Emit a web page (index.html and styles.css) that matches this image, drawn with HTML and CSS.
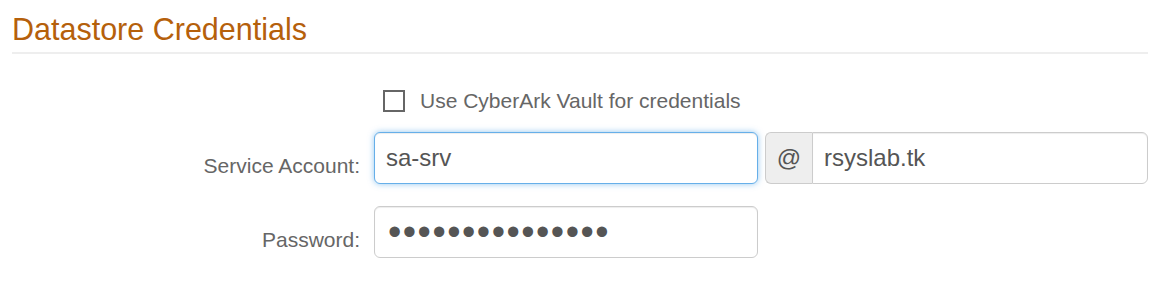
FILE: index.html
```html
<!DOCTYPE html>
<html lang="en">
<head>
    <meta charset="UTF-8">
    <title>Datastore Credentials</title>
    <link rel="stylesheet" href="styles.css">
</head>
<body>
<div class="section">

    <!--标题-->
    <h3 class="section-title">Datastore Credentials</h3>

    <!--表单-->
    <form class="form">
        <div class="row row-check">
            <div class="label"></div>
            <div class="field">
                <label class="check">
                    <input type="checkbox">
                    <span>Use CyberArk Vault for credentials</span>
                </label>
            </div>
        </div>

        <div class="row">
            <label class="label" for="account">Service Account:</label>
            <div class="field">
                <input class="input focus" id="account" type="text" value="sa-srv">
            </div>
            <div class="group">
                <span class="addon">@</span>
                <input class="input" type="text" value="rsyslab.tk">
            </div>
        </div>

        <div class="row">
            <label class="label" for="pwd">Password:</label>
            <div class="field">
                <input class="input pwd" id="pwd" type="password" value="secretpassword1">
            </div>
        </div>
    </form>
</div>
</body>
</html>
```

FILE: styles.css
```css
*{
    margin: 0;
    padding: 0;
    box-sizing: border-box;
}
body{
    background: #fff;
    font-family: "Liberation Sans", Arial, sans-serif;
    color: #666;
}
.section{
    padding: 11px 15px 0 12px;
}
.section-title{
    font-size: 30.5px;
    font-weight: normal;
    line-height: 36px;
    color: #b5600b;
    padding-bottom: 5px;
    border-bottom: 2px solid #eee;
}
.form{
    padding-top: 35px;
}
.row{
    display: flex;
    align-items: flex-start;
    margin-bottom: 22px;
}
.row-check{
    margin-bottom: 19px;
}
.row .label{
    width: 348px;
    text-align: right;
    font-size: 21px;
    line-height: 24px;
    margin-right: 14px;
    padding-top: 22px;
}
.row-check .label{
    padding-top: 0;
}
.row .field{
    width: 384px;
}
.check{
    display: flex;
    align-items: center;
    height: 24px;
    padding-left: 9px;
    font-size: 21px;
    color: #666;
}
.check input{
    appearance: none;
    -webkit-appearance: none;
    width: 22px;
    height: 22px;
    border: 2px solid #666;
    background: #fff;
    margin-right: 15px;
}
.input{
    display: block;
    width: 100%;
    height: 52px;
    padding: 0 11px;
    border: 1px solid #ccc;
    border-radius: 6px;
    font-family: "Liberation Sans", Arial, sans-serif;
    font-size: 24px;
    color: #555;
    background: #fff;
    box-shadow: inset 0 1px 1px rgba(0,0,0,0.075);
    outline: none;
}
.input.focus{
    border-color: #66afe9;
    box-shadow: inset 0 1px 1px rgba(0,0,0,0.075), 0 0 6px rgba(102,175,233,0.7);
}
.input.pwd{
    font-size: 38px;
    letter-spacing: 1.5px;
    padding-left: 13px;
}
.group{
    display: flex;
    flex: 1;
    margin-left: 7px;
}
.group .addon{
    width: 47px;
    height: 52px;
    line-height: 50px;
    text-align: center;
    font-size: 24px;
    color: #555;
    background: #eee;
    border: 1px solid #ccc;
    border-right: 0;
    border-radius: 6px 0 0 6px;
}
.group .input{
    flex: 1;
    border-radius: 0 6px 6px 0;
}
```
